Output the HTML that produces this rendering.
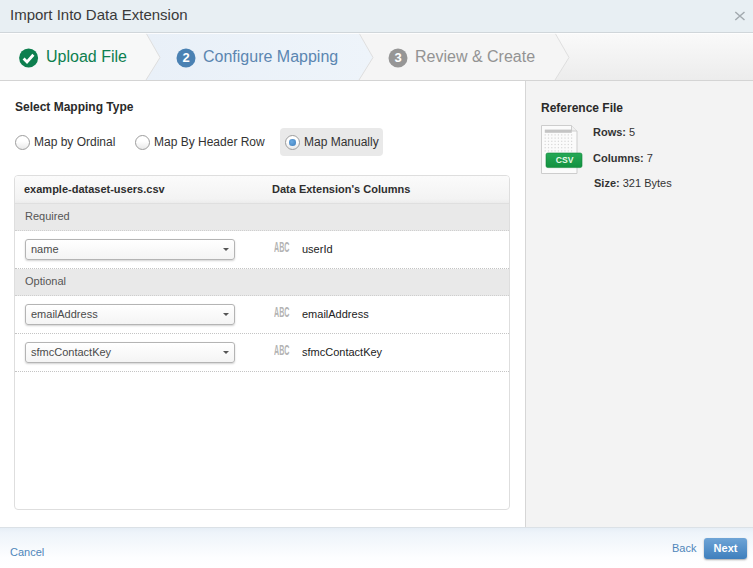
<!DOCTYPE html>
<html><head><meta charset="utf-8">
<style>
*{box-sizing:border-box;margin:0;padding:0}
html,body{width:753px;height:568px;overflow:hidden;background:#fff;font-family:"Liberation Sans",Arial,sans-serif;color:#222}
#hdr{position:absolute;left:0;top:0;width:753px;height:33px;background:#e8eff3;border-bottom:1px solid #d0d6da}
#hdr .t{position:absolute;left:10px;top:6px;font-size:15px;color:#3a3a3a}
#hdr .x{position:absolute;left:734px;top:11px;width:12px;height:10px}
#wiz{position:absolute;left:0;top:33px;width:753px;height:48px;background:#f3f3f3;border-bottom:1px solid #d4d4d4}
#wiz svg{position:absolute;left:0;top:0}
.st{position:absolute;top:15px;font-size:16px;white-space:nowrap}
#left{position:absolute;left:0;top:81px;width:525px;height:446px;background:#fff}
#right{position:absolute;left:525px;top:81px;width:228px;height:446px;background:#f3f3f3;border-left:1px solid #d6d6d6}
#foot{position:absolute;left:0;top:527px;width:753px;height:41px;border-top:1px solid #dbe1e6;background:linear-gradient(#e6eef6,#eef4fa 12%,#fdfeff 75%,#fff)}
h3{position:absolute;font-size:12px;font-weight:bold;color:#2a2a2a}
.rad{position:absolute;top:128px;height:28px;font-size:12px;color:#333}
.rad .c{position:absolute;top:7px;width:15px;height:15px;border-radius:50%;border:1px solid #9d9d9d;background:linear-gradient(#fff 40%,#e9e9e9)}
.rad span{position:absolute;top:7px;white-space:nowrap}
#grid{position:absolute;left:14px;top:175px;width:496px;height:335px;border:1px solid #dedede;border-radius:4px;background:#fff;overflow:hidden}
.gh{position:absolute;left:0;top:0;width:100%;height:28px;background:linear-gradient(#fbfbfb,#f3f3f3 85%,#ececec);border-bottom:1px solid #dfdfdf;font-weight:bold;font-size:11px;color:#2e2e2e}
.grp{position:absolute;left:0;width:100%;height:27px;background:#e9e9e9;font-size:11px;color:#555;border-bottom:1px dotted #cfcfcf}
.grp span{position:absolute;left:10px;top:6px}
.row{position:absolute;left:0;width:100%;height:38px;border-bottom:1px dotted #c4c4c4;font-size:11px}
.sel{position:absolute;left:10px;top:8px;width:210px;height:21px;border:1px solid #b4b4b4;border-radius:3px;background:linear-gradient(#fff,#f4f4f4);box-shadow:0 1px 2px rgba(0,0,0,.18)}
.sel span{position:absolute;left:5px;top:3px;font-size:11px;color:#4a4a4a}
.sel i{position:absolute;right:5px;top:8px;border:3px solid transparent;border-top:3px solid #555;border-bottom:0}
.abc{position:absolute;left:259px;top:8px;font-size:14.5px;font-weight:bold;color:#b3b3b3;transform:scaleX(.49);transform-origin:left;letter-spacing:0}
.col{position:absolute;left:287px;top:12px;font-size:11px;color:#222}
</style></head><body>
<div id="hdr"><div class="t">Import Into Data Extension</div>
<svg class="x" viewBox="0 0 12 10"><path d="M1.3 1L10.5 9M10.5 1L1.3 9" stroke="#a3aaaf" stroke-width="1.5" fill="none"/></svg></div>
<div id="wiz">
<svg width="753" height="47" viewBox="0 0 753 47">
<defs><linearGradient id="g1" x1="0" y1="0" x2="0" y2="1"><stop offset="0" stop-color="#fafafa"/><stop offset="1" stop-color="#ececec"/></linearGradient>
<linearGradient id="g2" x1="0" y1="0" x2="1" y2="0"><stop offset="0" stop-color="#e9f0f8"/><stop offset="1" stop-color="#eef4fa"/></linearGradient></defs>
<rect x="0" y="0" width="753" height="47" fill="url(#g1)"/>
<path d="M0 0H146L160 24.5L146 47H0Z" fill="#f7f8f8"/>
<path d="M146 0H359L373 24.5L359 47H146L160 24.5Z" fill="url(#g2)"/>
<path d="M359 0H555L569 24.5L555 47H359L373 24.5Z" fill="#f5f5f5"/>
<path d="M146 0L160 24.5L146 47M359 0L373 24.5L359 47M555 0L569 24.5L555 47" stroke="#dedede" stroke-width="1" fill="none"/>
<rect x="0" y="0" width="753" height="1" fill="#fff" opacity=".8"/>
<circle cx="28.6" cy="25" r="9.5" fill="#0d7f4f"/>
<path d="M23.6 25.6L27 29L33.4 21.8" stroke="#fff" stroke-width="2.8" fill="none"/>
<circle cx="186" cy="25" r="9.5" fill="#4a81b3"/>
<text x="186" y="29.4" font-family="Liberation Sans" font-weight="bold" font-size="13" fill="#fff" text-anchor="middle">2</text>
<circle cx="398" cy="25" r="9.5" fill="#969696"/>
<text x="398" y="29.4" font-family="Liberation Sans" font-weight="bold" font-size="13" fill="#fff" text-anchor="middle">3</text>
</svg>
<div class="st" style="left:46px;color:#0d7f4f">Upload File</div>
<div class="st" style="left:203px;color:#5b86b1">Configure Mapping</div>
<div class="st" style="left:415px;color:#939393">Review &amp; Create</div>
</div>
<div id="left"></div>
<div id="right"></div>
<h3 style="left:15px;top:100px">Select Mapping Type</h3>
<div class="rad" style="left:14px;width:110px"><div class="c" style="left:1px"></div><span style="left:20px">Map by Ordinal</span></div>
<div class="rad" style="left:134px;width:140px"><div class="c" style="left:1px"></div><span style="left:20px">Map By Header Row</span></div>
<div class="rad" style="left:280px;width:103px;background:#e9e9e9;border-radius:4px"><div class="c" style="left:5px"></div><div style="position:absolute;left:9.2px;top:11.2px;width:6.6px;height:6.6px;border-radius:50%;background:radial-gradient(circle at 40% 40%,#6aaae2,#3f7dba)"></div><span style="left:24px">Map Manually</span></div>
<div id="grid">
<div class="gh"><span style="position:absolute;left:9px;top:7px">example-dataset-users.csv</span><span style="position:absolute;left:257px;top:7px">Data Extension's Columns</span></div>
<div class="grp" style="top:28px"><span>Required</span></div>
<div class="row" style="top:55px"><div class="sel"><span>name</span><i></i></div><div class="abc">ABC</div><div class="col">userId</div></div>
<div class="grp" style="top:93px"><span>Optional</span></div>
<div class="row" style="top:120px"><div class="sel"><span>emailAddress</span><i></i></div><div class="abc">ABC</div><div class="col">emailAddress</div></div>
<div class="row" style="top:158px"><div class="sel"><span>sfmcContactKey</span><i></i></div><div class="abc">ABC</div><div class="col">sfmcContactKey</div></div>
</div>
<h3 style="left:541px;top:101px">Reference File</h3>
<svg style="position:absolute;left:540px;top:124px" width="44" height="52" viewBox="0 0 44 52">
<defs><linearGradient id="gg" x1="0" y1="0" x2="0" y2="1"><stop offset="0" stop-color="#27a957"/><stop offset="1" stop-color="#11913f"/></linearGradient></defs>
<path d="M1.5 1.5H31.5L37 7V49.5H1.5Z" fill="#fbfbfb" stroke="#cdcdcd"/>
<path d="M31.5 1.5V7H37" fill="#f0f0f0" stroke="#cdcdcd"/>
<rect x="4.8" y="5.6" width="27" height="3.2" fill="#c4c4c4"/>
<g fill="#d6d6d6"><rect x="4.6" y="10.3" width="1.2" height="1.2"/><rect x="7.9" y="10.3" width="1.2" height="1.2"/><rect x="11.2" y="10.3" width="1.2" height="1.2"/><rect x="14.5" y="10.3" width="1.2" height="1.2"/><rect x="17.8" y="10.3" width="1.2" height="1.2"/><rect x="21.1" y="10.3" width="1.2" height="1.2"/><rect x="24.4" y="10.3" width="1.2" height="1.2"/><rect x="27.7" y="10.3" width="1.2" height="1.2"/><rect x="31.0" y="10.3" width="1.2" height="1.2"/><rect x="4.6" y="13.5" width="1.2" height="1.2"/><rect x="7.9" y="13.5" width="1.2" height="1.2"/><rect x="11.2" y="13.5" width="1.2" height="1.2"/><rect x="14.5" y="13.5" width="1.2" height="1.2"/><rect x="17.8" y="13.5" width="1.2" height="1.2"/><rect x="21.1" y="13.5" width="1.2" height="1.2"/><rect x="24.4" y="13.5" width="1.2" height="1.2"/><rect x="27.7" y="13.5" width="1.2" height="1.2"/><rect x="31.0" y="13.5" width="1.2" height="1.2"/><rect x="4.6" y="16.7" width="1.2" height="1.2"/><rect x="7.9" y="16.7" width="1.2" height="1.2"/><rect x="11.2" y="16.7" width="1.2" height="1.2"/><rect x="14.5" y="16.7" width="1.2" height="1.2"/><rect x="17.8" y="16.7" width="1.2" height="1.2"/><rect x="21.1" y="16.7" width="1.2" height="1.2"/><rect x="24.4" y="16.7" width="1.2" height="1.2"/><rect x="27.7" y="16.7" width="1.2" height="1.2"/><rect x="31.0" y="16.7" width="1.2" height="1.2"/><rect x="4.6" y="19.9" width="1.2" height="1.2"/><rect x="7.9" y="19.9" width="1.2" height="1.2"/><rect x="11.2" y="19.9" width="1.2" height="1.2"/><rect x="14.5" y="19.9" width="1.2" height="1.2"/><rect x="17.8" y="19.9" width="1.2" height="1.2"/><rect x="21.1" y="19.9" width="1.2" height="1.2"/><rect x="24.4" y="19.9" width="1.2" height="1.2"/><rect x="27.7" y="19.9" width="1.2" height="1.2"/><rect x="31.0" y="19.9" width="1.2" height="1.2"/><rect x="4.6" y="23.1" width="1.2" height="1.2"/><rect x="7.9" y="23.1" width="1.2" height="1.2"/><rect x="11.2" y="23.1" width="1.2" height="1.2"/><rect x="14.5" y="23.1" width="1.2" height="1.2"/><rect x="17.8" y="23.1" width="1.2" height="1.2"/><rect x="21.1" y="23.1" width="1.2" height="1.2"/><rect x="24.4" y="23.1" width="1.2" height="1.2"/><rect x="27.7" y="23.1" width="1.2" height="1.2"/><rect x="31.0" y="23.1" width="1.2" height="1.2"/><rect x="4.6" y="26.3" width="1.2" height="1.2"/><rect x="7.9" y="26.3" width="1.2" height="1.2"/><rect x="11.2" y="26.3" width="1.2" height="1.2"/><rect x="14.5" y="26.3" width="1.2" height="1.2"/><rect x="17.8" y="26.3" width="1.2" height="1.2"/><rect x="21.1" y="26.3" width="1.2" height="1.2"/><rect x="24.4" y="26.3" width="1.2" height="1.2"/><rect x="27.7" y="26.3" width="1.2" height="1.2"/><rect x="31.0" y="26.3" width="1.2" height="1.2"/></g>
<rect x="6" y="29" width="36" height="14.6" rx="1.8" fill="url(#gg)" stroke="#0e8438" stroke-width=".6"/>
<text x="24.6" y="39.3" font-family="Liberation Sans" font-weight="bold" font-size="8.6" fill="#e9fbe9" text-anchor="middle">CSV</text>
</svg>
<div style="position:absolute;left:593px;top:126px;font-size:11px;color:#333"><b>Rows:</b> 5</div>
<div style="position:absolute;left:593px;top:152px;font-size:11px;color:#333"><b>Columns:</b> 7</div>
<div style="position:absolute;left:594px;top:177px;font-size:11px;color:#333"><b>Size:</b> 321 Bytes</div>
<div id="foot">
<div style="position:absolute;left:10px;top:18px;font-size:11px;color:#4f86ba">Cancel</div>
<div style="position:absolute;left:672px;top:14px;font-size:11px;color:#4f86ba">Back</div>
<div style="position:absolute;left:704px;top:10px;width:43px;height:21px;border-radius:3px;background:linear-gradient(#6ea4d6,#3f7fbd);box-shadow:0 1px 2px rgba(0,0,0,.35);color:#fff;font-weight:bold;font-size:11px;text-align:center;line-height:21px">Next</div>
</div>
</body></html>
